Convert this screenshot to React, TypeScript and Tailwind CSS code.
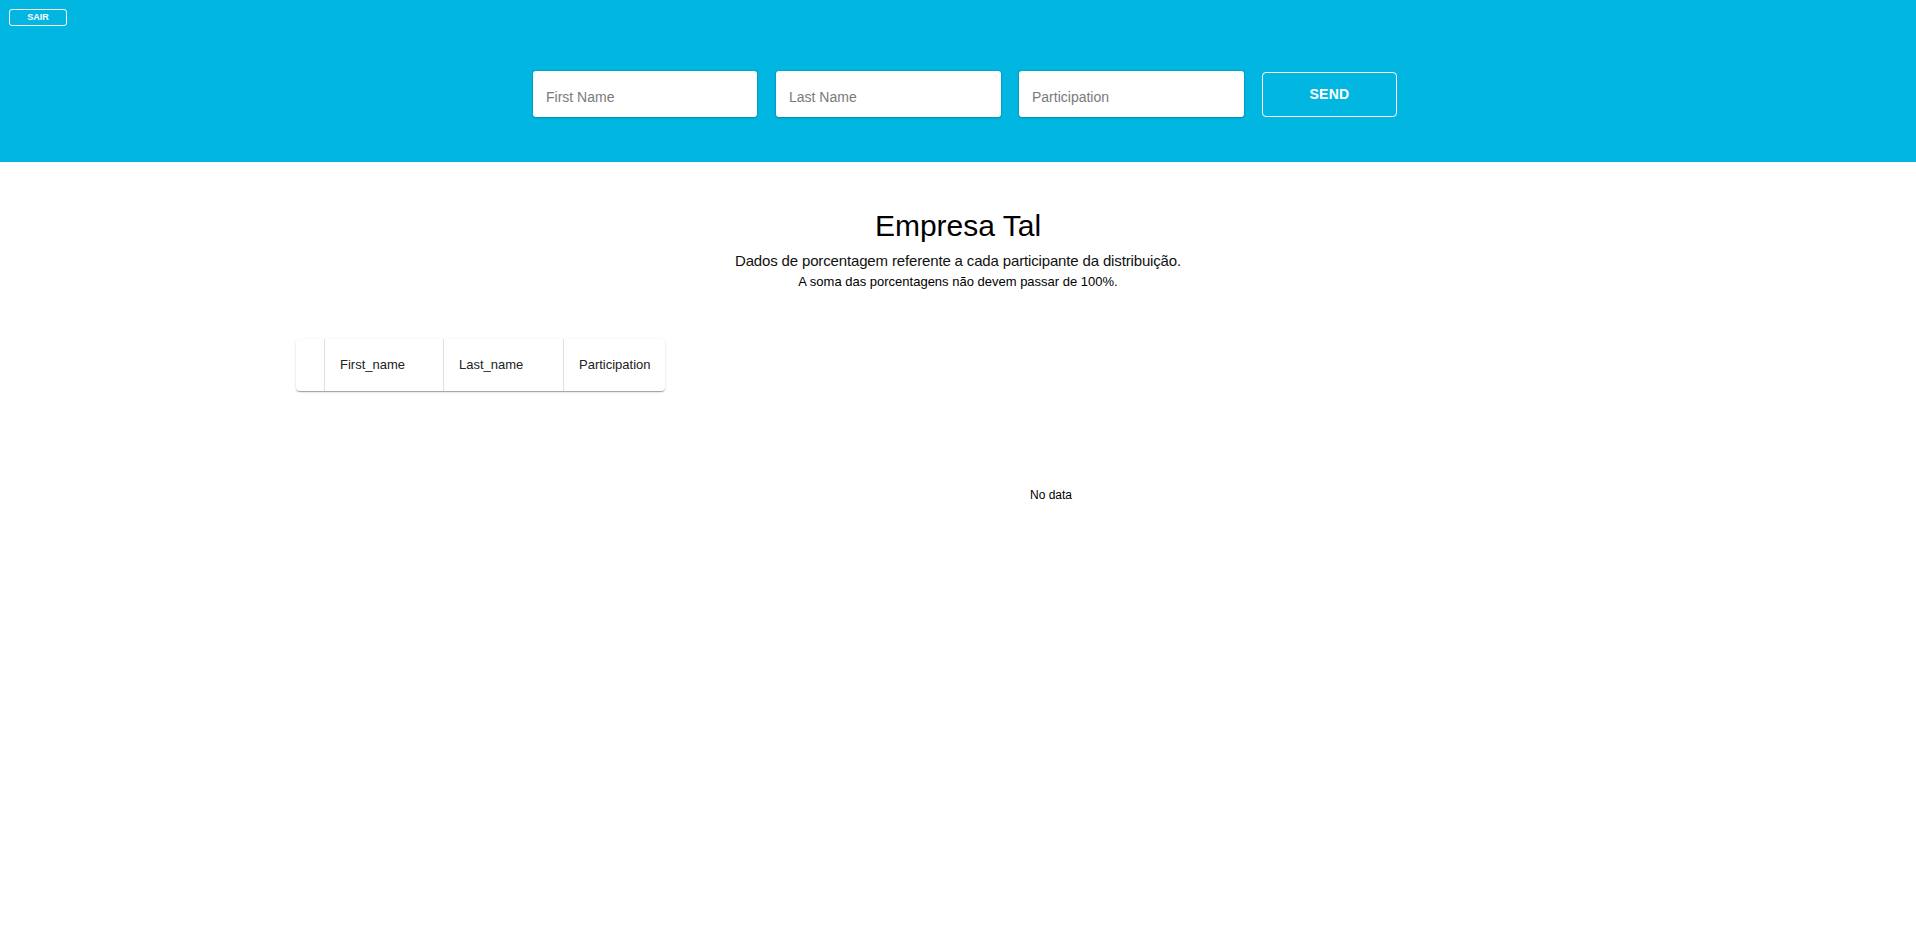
import React from "react";

export default function App() {
  const font = { fontFamily: '"Liberation Sans", Arial, sans-serif' };
  const inputCls =
    "h-[46px] bg-white rounded-[3px] pl-[13px] pt-[18px] pb-[12px] text-[14px] leading-[16px] text-[#333] placeholder:text-[#7a7a7a] outline-none shadow-[0_0_1px_1px_rgba(0,90,130,0.18),0_1px_2px_rgba(0,60,90,0.25)]";
  return (
    <div className="min-h-[941px] w-full bg-white" style={font}>
      <header className="h-[162px] bg-[#01b7e1] flex flex-col">
        <div className="pt-[9px] pl-[9px]">
          <button className="w-[58px] h-[17px] rounded-[3px] border border-white text-white text-[9px] font-bold leading-none flex items-center justify-center">
            SAIR
          </button>
        </div>
        <form className="mt-[45px] flex justify-center items-start pl-[14px]" onSubmit={(e) => e.preventDefault()}>
          <input placeholder="First Name" className={"w-[224px] " + inputCls} style={font} />
          <input placeholder="Last Name" className={"ml-[19px] w-[225px] " + inputCls} style={font} />
          <input placeholder="Participation" className={"ml-[18px] w-[225px] " + inputCls} style={font} />
          <button
            type="submit"
            className="ml-[18px] mt-[1px] w-[135px] h-[45px] rounded-[4px] border border-white text-white text-[14px] font-bold tracking-[0.3px]"
            style={font}
          >
            SEND
          </button>
        </form>
      </header>

      <main className="flex flex-col items-center">
        <h1 className="mt-[47px] text-[30px] leading-[34px] text-black font-normal">Empresa Tal</h1>
        <p className="mt-[8px] text-[15px] leading-[20px] tracking-[-0.15px] text-[#111]">
          Dados de porcentagem referente a cada participante da distribuição.
        </p>
        <p className="mt-[2px] text-[13px] leading-[18px] text-black">
          A soma das porcentagens não devem passar de 100%.
        </p>
      </main>

      <section className="mt-[48px] pl-[296px] flex items-start">
        <div className="w-[369px] h-[52px] bg-white rounded-[4px] flex shadow-[0_2px_1px_-1px_rgba(0,0,0,0.2),0_1px_1px_0_rgba(0,0,0,0.14),0_1px_3px_0_rgba(0,0,0,0.12)] text-[13px] text-[#222]">
          <div className="w-[29px] border-r border-[#e0e0e0]" />
          <div className="w-[119px] border-r border-[#e0e0e0] pl-[15px] flex items-center">First_name</div>
          <div className="w-[120px] border-r border-[#e0e0e0] pl-[15px] flex items-center">Last_name</div>
          <div className="flex-1 pl-[15px] flex items-center">Participation</div>
        </div>
        <div className="ml-[286px] mt-[149px] w-[200px] text-center text-[12px] leading-[14px] text-black">
          No data
        </div>
      </section>
    </div>
  );
}
